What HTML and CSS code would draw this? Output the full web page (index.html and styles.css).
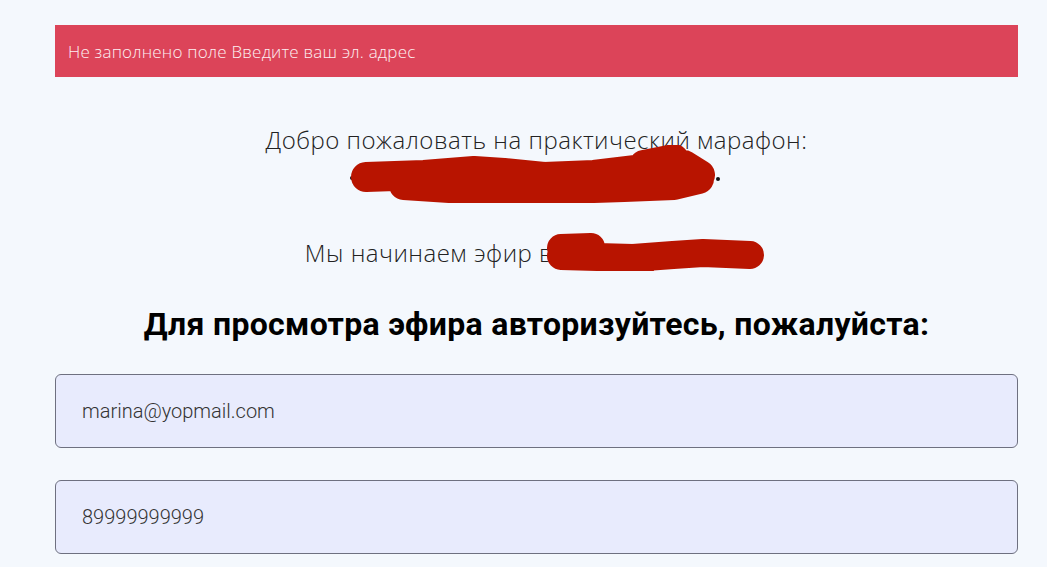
FILE: index.html
```html
<!DOCTYPE html>
<html lang="ru">
<head>
    <meta charset="UTF-8">
    <meta name="viewport" content="width=device-width, initial-scale=1.0">
    <title>Практический марафон</title>
    <link rel="stylesheet" href="styles.css">
</head>
<body>
    <div class="container">
        <div class="alert">Не заполнено поле Введите ваш эл. адрес</div>

        <p class="welcome">Добро пожаловать на практический марафон:</p>
        <svg class="redact-title" width="380" height="58" viewBox="0 0 380 58">
            <circle cx="8" cy="33" r="2" fill="#111"/>
            <circle cx="374" cy="34" r="2" fill="#111"/>
            <path d="M22 32 L80 30 L130 26 L160 28 L200 32 L250 30 L300 24 L340 20 L356 30 M60 40 L120 44 L160 46 L220 44 L280 42 L330 40 L355 34 M300 20 L330 14"
                  fill="none" stroke="#b81400" stroke-width="30" stroke-linecap="round" stroke-linejoin="round"/>
        </svg>

        <p class="start">Мы начинаем эфир в<svg class="redact-time" width="225" height="40" viewBox="0 0 225 40">
            <path d="M18 17 L48 16 M18 25 L90 27 L130 24 L160 22 L207 24 M80 30 L100 31"
                  fill="none" stroke="#b81400" stroke-width="28" stroke-linecap="round" stroke-linejoin="round"/>
        </svg></p>

        <h2 class="auth-title">Для просмотра эфира авторизуйтесь, пожалуйста:</h2>

        <form class="auth-form">
            <input type="email" class="field" name="email" value="marina@yopmail.com" placeholder="Введите ваш эл. адрес">
            <input type="tel" class="field" name="phone" value="89999999999" placeholder="Введите ваш телефон">
        </form>
    </div>
</body>
</html>
```

FILE: styles.css
```css
body {
    margin: 0;
    padding: 0;
    background-color: #f4f8fd;
    font-family: "Open Sans", sans-serif;
    overflow: hidden;
}
.container {
    width: 963px;
    margin-left: 55px;
    padding-top: 25px;
}
.alert {
    height: 52px;
    padding: 0 13px;
    display: flex;
    align-items: center;
    background-color: #dc4459;
    color: #fdf0f2;
    font-weight: 300;
    font-size: 17px;
    letter-spacing: 0.2px;
}
.welcome {
    margin: 47px 0 0;
    text-align: center;
    font-weight: 300;
    font-size: 24px;
    letter-spacing: 0.5px;
    line-height: 32px;
    color: #222;
}
.redact-title {
    display: block;
    margin: -11px auto 0;
    position: relative;
    left: -3px;
}
.start {
    margin: 28px 0 0;
    text-align: center;
    font-weight: 300;
    font-size: 24px;
    letter-spacing: 0.5px;
    line-height: 32px;
    color: #222;
}
.redact-time {
    vertical-align: -9px;
    margin-left: -10px;
}
.auth-title {
    margin: 33px 0 0;
    text-align: center;
    font-family: Roboto, sans-serif;
    font-weight: 700;
    font-size: 32px;
    letter-spacing: 0.3px;
    line-height: 40px;
    color: #000;
}
.auth-form {
    margin-top: 30px;
    display: flex;
    flex-direction: column;
    gap: 32px;
}
.field {
    box-sizing: border-box;
    width: 100%;
    height: 74px;
    padding: 0 26px;
    border: 1px solid #6e7080;
    border-radius: 6px;
    background-color: #e8ebfd;
    font-family: Roboto, sans-serif;
    font-weight: 300;
    font-size: 20px;
    color: #333;
    outline: none;
}
```
